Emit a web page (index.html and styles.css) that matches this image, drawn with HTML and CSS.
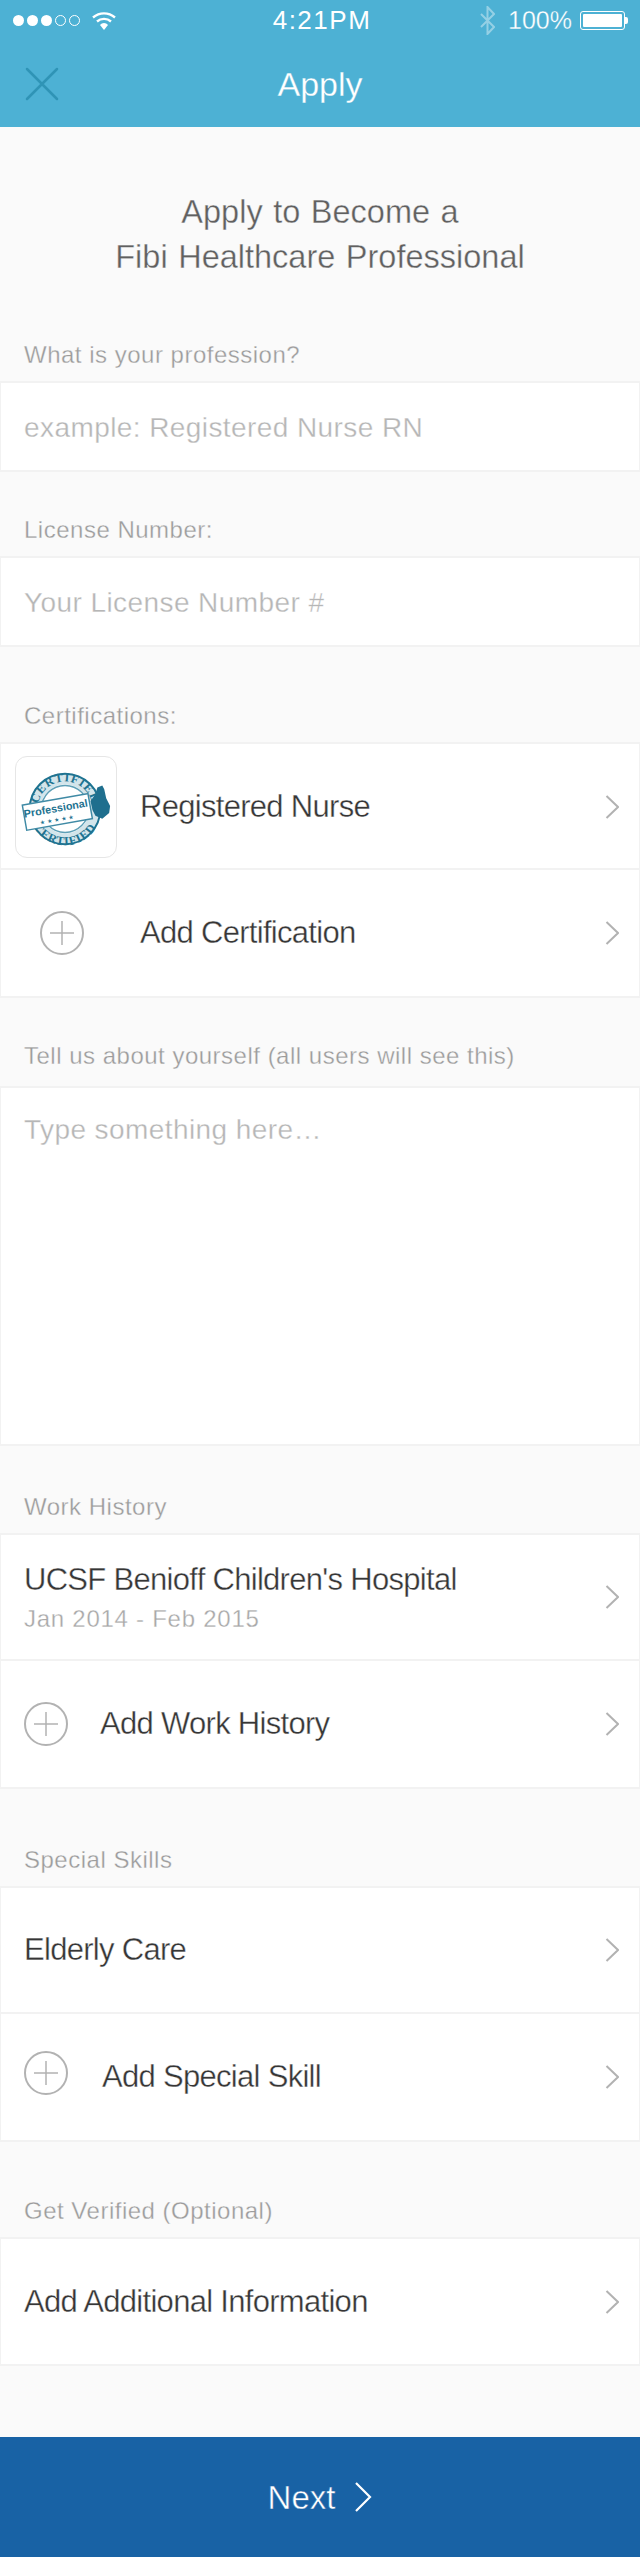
FILE: index.html
```html
<!DOCTYPE html>
<html lang="en">
<head>
<meta charset="utf-8">
<title>Apply</title>
<link rel="stylesheet" href="styles.css">
</head>
<body>
<header class="top">
  <div class="status">
    <div class="status-left">
      <span class="dot"></span><span class="dot"></span><span class="dot"></span><span class="dot dot-empty"></span><span class="dot dot-empty"></span>
      <svg class="wifi" viewBox="0 0 24 19" width="24" height="19"><path d="M1 6.500C7.500 1 16.500 1 23 6.500" fill="none" stroke="#fff" stroke-width="2.400"/><path d="M5 10.500C9 7 15 7 19 10.500" fill="none" stroke="#fff" stroke-width="2.400"/><path d="M8 14C10 11.300 14 11.300 16 14L12 19Z" fill="#fff"/></svg>
    </div>
    <div class="status-time">4:21PM</div>
    <div class="status-right">
      <svg class="bt" viewBox="0 0 15 29" width="15" height="29"><path d="M1 8L14 21L7.500 28V1L14 8L1 21" fill="none" stroke="#fff" stroke-width="2"/></svg>
      <span class="pct">100%</span>
      <span class="battery"><span class="battery-fill"></span></span><span class="battery-nub"></span>
    </div>
  </div>
  <nav class="nav">
    <svg class="close" viewBox="0 0 34 34" width="34" height="34"><path d="M2 2L32 32M32 2L2 32" stroke="#2f94b6" stroke-width="2.500" stroke-linecap="round"/></svg>
    <div class="nav-title">Apply</div>
    <div></div>
  </nav>
</header>

<main>
  <h1 class="title">Apply to Become a<br>Fibi Healthcare Professional</h1>

  <div class="label label-first">What is your profession?</div>
  <div class="group"><div class="field">example: Registered Nurse RN</div></div>

  <div class="label label-84">License Number:</div>
  <div class="group"><div class="field">Your License Number #</div></div>

  <div class="label label-95">Certifications:</div>
  <div class="group">
    <div class="row row-cert">
      <div class="badge">
        <svg viewBox="0 0 102 102" width="100" height="100">
          <defs>
            <path id="arc-top" d="M22 53A28 28 0 0 1 78 53"/>
            <path id="arc-bottom" d="M13 53A37 37 0 0 0 87 53"/>
          </defs>
          <circle cx="50" cy="53" r="30.500" fill="none" stroke="#d3e5eb" stroke-width="11"/>
          <circle cx="50" cy="53" r="36" fill="none" stroke="#1f7391" stroke-width="2"/>
          <circle cx="50" cy="53" r="24" fill="none" stroke="#5e9fb6" stroke-width="1.500"/>
          <text class="arc-text"><textPath href="#arc-top" startOffset="50%" text-anchor="middle">CERTIFIED</textPath></text>
          <text class="arc-text"><textPath href="#arc-bottom" startOffset="50%" text-anchor="middle">CERTIFIED</textPath></text>
          <path d="M76 45L81 38L83 31L88 29L90 33L92 42L96 50L95 57L88 63L81 60L78 54Z" fill="#1f6f8e"/>
          <g transform="rotate(-10 42 55)">
            <rect x="8" y="43" width="68" height="26" fill="#fff" stroke="#3f8aa5" stroke-width="1.500"/>
            <text class="banner-text" x="41" y="56" text-anchor="middle">Professional</text>
            <text class="star-text" x="41" y="66" text-anchor="middle">★★★★★</text>
          </g>
        </svg>
      </div>
      <span class="row-text">Registered Nurse</span>
      <svg class="chev" viewBox="0 0 14 24" width="14" height="24"><path d="M1.500 1L13 12L1.500 23" fill="none" stroke="#b2b2b2" stroke-width="2"/></svg>
    </div>
    <div class="row row-last">
      <svg class="plus plus-cert" viewBox="0 0 44 44" width="44" height="44"><circle cx="22" cy="22" r="21" fill="none" stroke="#b2b2b2" stroke-width="2"/><path d="M22 10V34M10 22H34" stroke="#b2b2b2" stroke-width="1.500"/></svg>
      <span class="row-text">Add Certification</span>
      <svg class="chev" viewBox="0 0 14 24" width="14" height="24"><path d="M1.500 1L13 12L1.500 23" fill="none" stroke="#b2b2b2" stroke-width="2"/></svg>
    </div>
  </div>

  <div class="label label-88">Tell us about yourself (all users will see this)</div>
  <div class="group"><div class="about">Type something here…</div></div>

  <div class="label label-87">Work History</div>
  <div class="group">
    <div class="row">
      <div class="stack">
        <span class="row-text">UCSF Benioff Children's Hospital</span>
        <span class="row-sub">Jan 2014 - Feb 2015</span>
      </div>
      <svg class="chev" viewBox="0 0 14 24" width="14" height="24"><path d="M1.500 1L13 12L1.500 23" fill="none" stroke="#b2b2b2" stroke-width="2"/></svg>
    </div>
    <div class="row row-last">
      <svg class="plus plus-work" viewBox="0 0 44 44" width="44" height="44"><circle cx="22" cy="22" r="21" fill="none" stroke="#b2b2b2" stroke-width="2"/><path d="M22 10V34M10 22H34" stroke="#b2b2b2" stroke-width="1.500"/></svg>
      <span class="row-text">Add Work History</span>
      <svg class="chev" viewBox="0 0 14 24" width="14" height="24"><path d="M1.500 1L13 12L1.500 23" fill="none" stroke="#b2b2b2" stroke-width="2"/></svg>
    </div>
  </div>

  <div class="label label-97">Special Skills</div>
  <div class="group">
    <div class="row">
      <span class="row-text">Elderly Care</span>
      <svg class="chev" viewBox="0 0 14 24" width="14" height="24"><path d="M1.500 1L13 12L1.500 23" fill="none" stroke="#b2b2b2" stroke-width="2"/></svg>
    </div>
    <div class="row row-last">
      <svg class="plus plus-skill" viewBox="0 0 44 44" width="44" height="44"><circle cx="22" cy="22" r="21" fill="none" stroke="#b2b2b2" stroke-width="2"/><path d="M22 10V34M10 22H34" stroke="#b2b2b2" stroke-width="1.500"/></svg>
      <span class="row-text">Add Special Skill</span>
      <svg class="chev" viewBox="0 0 14 24" width="14" height="24"><path d="M1.500 1L13 12L1.500 23" fill="none" stroke="#b2b2b2" stroke-width="2"/></svg>
    </div>
  </div>

  <div class="label label-95">Get Verified (Optional)</div>
  <div class="group">
    <div class="row row-single">
      <span class="row-text">Add Additional Information</span>
      <svg class="chev" viewBox="0 0 14 24" width="14" height="24"><path d="M1.500 1L13 12L1.500 23" fill="none" stroke="#b2b2b2" stroke-width="2"/></svg>
    </div>
  </div>
</main>

<footer class="next">
  <span class="next-text">Next</span>
  <svg viewBox="0 0 18 30" width="18" height="30"><path d="M2 1L16 15L2 29" fill="none" stroke="#fff" stroke-width="2.200"/></svg>
</footer>
</body>
</html>
```

FILE: styles.css
```css
* { box-sizing: border-box; }
html, body { margin: 0; padding: 0; }
body {
  width: 640px;
  height: 2557px;
  background: #fafafa;
  font-family: "Liberation Sans", Arial, sans-serif;
  font-weight: 400;
  display: flex;
  flex-direction: column;
  overflow: hidden;
}
.top { background: #4db1d4; color: #fff; height: 127px; flex: none; }
.status {
  height: 40px;
  display: grid;
  grid-template-columns: 1fr auto 1fr;
  align-items: center;
  padding: 0 12px 0 13px;
}
.status-left { display: flex; align-items: center; gap: 3px; }
.dot { width: 11px; height: 11px; border-radius: 50%; background: #fff; }
.dot-empty { background: none; border: 1px solid #fff; }
.wifi { margin-left: 9px; }
.status-time { font-size: 26px; letter-spacing: 1.500px; margin-left: 3px; }
.status-right { display: flex; align-items: center; justify-content: flex-end; }
.bt { opacity: .4; margin-right: 13px; }
.pct { font-size: 25px; margin-right: 8px; -webkit-text-stroke: .3px #4db1d4; }
.battery { width: 45px; height: 19px; border: 1px solid #fff; border-radius: 3px; padding: 2px; display: block; }
.battery-fill { display: block; height: 100%; background: #fff; border-radius: 1px; }
.battery-nub { width: 3px; height: 7px; background: #fff; border-radius: 0 2px 2px 0; }
.nav {
  height: 87px;
  display: grid;
  grid-template-columns: 1fr auto 1fr;
  align-items: center;
}
.close { margin-left: 25px; }
.nav-title { font-size: 34px; line-height: 40px; -webkit-text-stroke: .3px #4db1d4; }

main { flex: 1; }
.title {
  margin: 0;
  padding-top: 63px;
  font-size: 32.500px;
  font-weight: 400;
  line-height: 45px;
  color: #606060;
  text-align: center;
  word-spacing: 1.500px;
  -webkit-text-stroke: .35px #fafafa;
}
.label {
  display: flex;
  align-items: flex-end;
  padding: 0 24px 11px;
  font-size: 24px;
  line-height: 30px;
  letter-spacing: .5px;
  color: #9c9c9c;
  -webkit-text-stroke: .3px #fafafa;
}
.label-first { height: 101px; }
.label-84 { height: 84px; }
.label-95 { height: 95px; }
.label-88 { height: 88px; padding-bottom: 15px; }
.label-87 { height: 87px; }
.label-97 { height: 97px; }

.group {
  background: #fff;
  border-top: 2px solid #f2f2f2;
  border-bottom: 2px solid #f2f2f2;
  border-left: 1px solid #f2f2f2;
  border-right: 1px solid #f2f2f2;
}
.field {
  height: 87px;
  display: flex;
  align-items: center;
  padding: 2px 0 0 23px;
  font-size: 28px;
  letter-spacing: .42px;
  color: #b6b6b6;
  -webkit-text-stroke: .3px #fff;
}
.about {
  height: 356px;
  padding: 24px 0 0 23px;
  font-size: 28px;
  line-height: 36px;
  letter-spacing: .42px;
  color: #b6b6b6;
  -webkit-text-stroke: .3px #fff;
}
.row {
  height: 126px;
  display: flex;
  align-items: center;
  padding: 0 20px 0 23px;
  border-bottom: 2px solid #f2f2f2;
}
.row-last { border-bottom: 0; }
.row-single { border-bottom: 0; height: 125px; }
.row-cert { padding: 2px 20px 0 14px; }
.row-text { font-size: 31px; letter-spacing: -.7px; color: #363636; -webkit-text-stroke: .35px #fff; }
.row-sub { font-size: 24px; letter-spacing: .74px; color: #a8a8a8; -webkit-text-stroke: .3px #fff; }
.stack { display: flex; flex-direction: column; gap: 7px; }
.chev { margin-left: auto; flex: none; }
.badge {
  width: 102px;
  height: 102px;
  border: 1px solid #e6e6e6;
  border-radius: 12px;
  margin-right: 23px;
  flex: none;
}
.badge svg { display: block; }
.arc-text { font-family: "Liberation Serif", serif; font-weight: 700; font-size: 12.500px; letter-spacing: .9px; fill: #1f7391; }
.banner-text { font-family: "Liberation Sans", sans-serif; font-weight: 700; font-size: 11px; fill: #1f7391; }
.star-text { font-family: "DejaVu Sans", sans-serif; font-size: 6px; letter-spacing: 2px; fill: #1f7391; }
.plus { flex: none; }
.plus-cert { margin: 0 56px 0 16px; }
.plus-work { margin-right: 32px; }
.plus-skill { margin: 0 34px 8px 0; }

.next {
  height: 120px;
  flex: none;
  background: #1862a5;
  color: #fff;
  font-size: 33px;
  display: flex;
  align-items: center;
  justify-content: center;
  gap: 19px;
}
.next-text { padding-top: 2px; -webkit-text-stroke: .45px #1862a5; }
```
